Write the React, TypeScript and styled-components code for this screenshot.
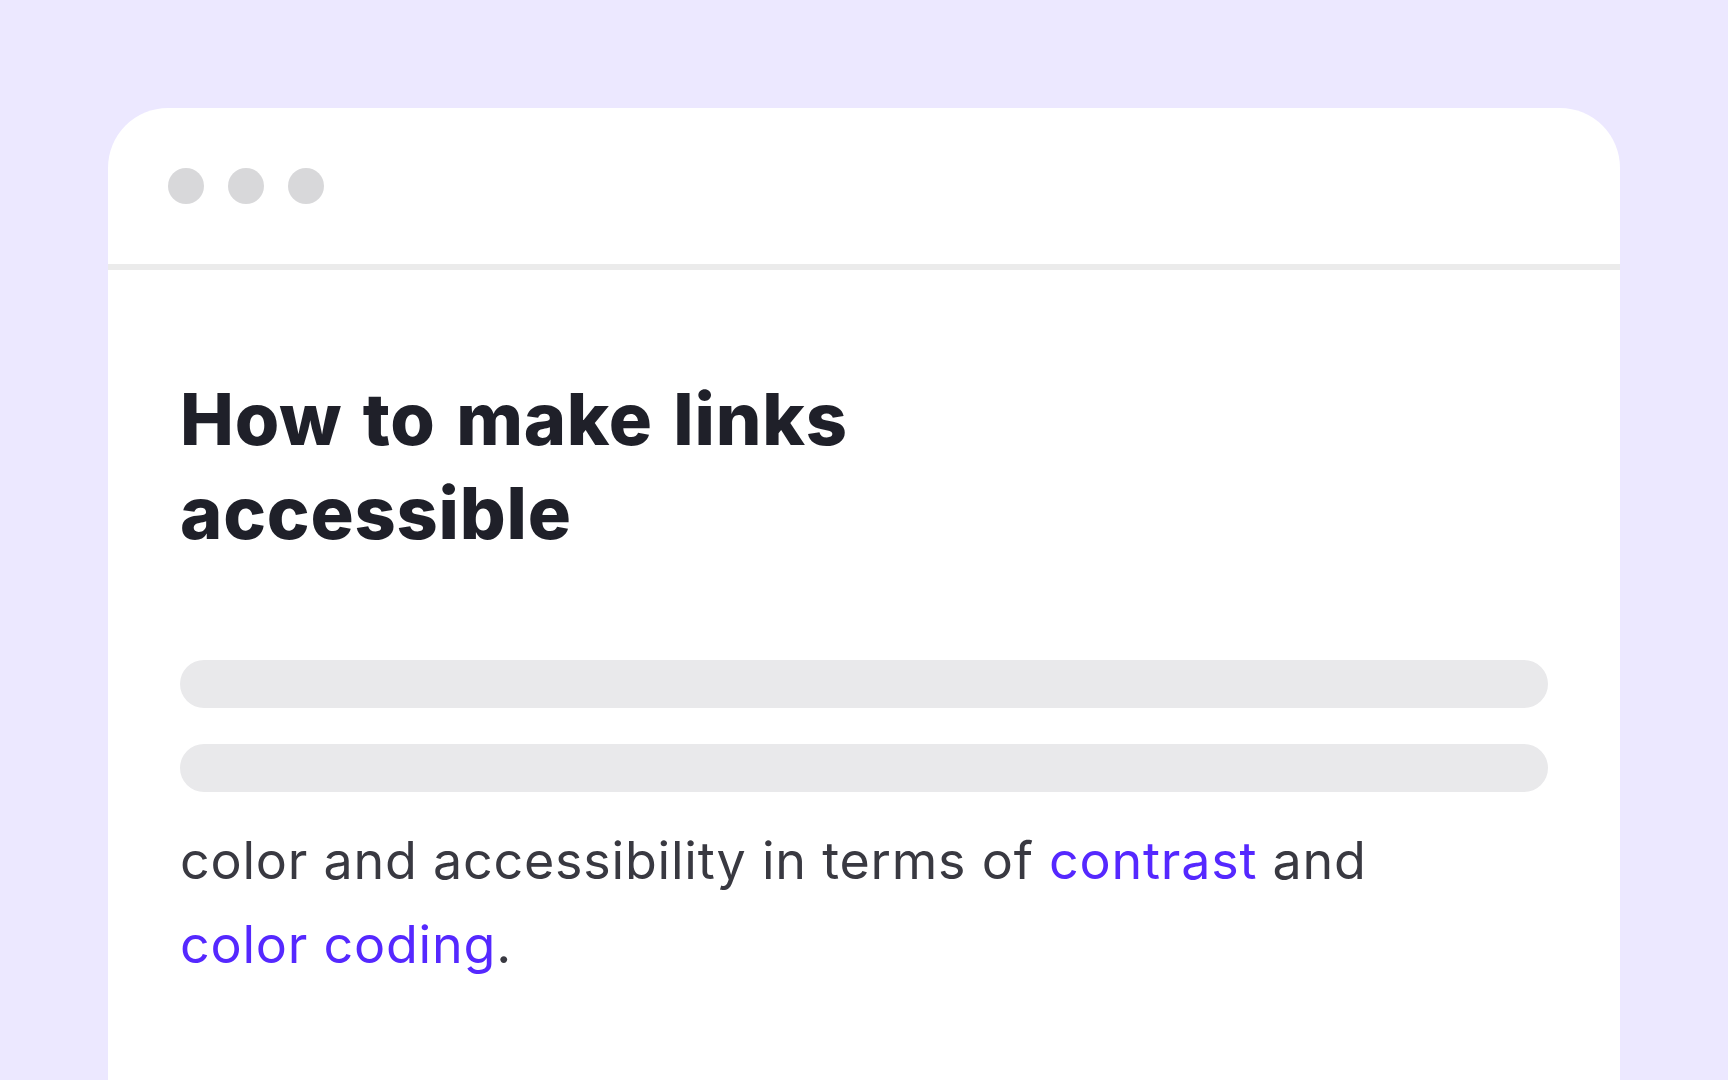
import * as React from "react";
import styled, { createGlobalStyle } from "styled-components";

const GlobalStyle = createGlobalStyle`
  html, body {
    margin: 0;
    padding: 0;
    height: 100%;
    overflow: hidden;
    background: #ece8ff;
  }
`;

const Page = styled.div`
  box-sizing: border-box;
  height: 100vh;
  padding: 108px 108px 0;
  display: flex;
  flex-direction: column;
`;

const Window = styled.div`
  flex: 1;
  background: #ffffff;
  border-radius: 60px 60px 0 0;
  display: flex;
  flex-direction: column;
`;

const TitleBar = styled.div`
  height: 156px;
  padding: 60px 60px 0;
  box-sizing: border-box;
  display: flex;
  gap: 24px;
`;

const Divider = styled.div`
  height: 6px;
  background: #ebebeb;
`;

const Dot = styled.span`
  width: 36px;
  height: 36px;
  border-radius: 50%;
  background: #d8d8da;
`;

const Content = styled.div`
  padding: 102px 72px 0;
  display: flex;
  flex-direction: column;
`;

const Title = styled.h1`
  margin: 0;
  font-family: Inter, "Noto Sans", sans-serif;
  font-weight: 800;
  font-size: 72px;
  line-height: 93.6px;
  letter-spacing: 0.011em;
  word-spacing: 4px;
  color: #1f2029;
`;

const Skeleton = styled.div`
  margin-top: 101px;
  display: flex;
  flex-direction: column;
  gap: 36px;
`;

const Bar = styled.div`
  height: 48px;
  border-radius: 24px;
  background: #e9e9eb;
`;

const Text = styled.p`
  margin: 27px 0 0;
  max-width: 1240px;
  font-family: Inter, "Noto Sans", sans-serif;
  font-weight: 400;
  font-size: 52px;
  line-height: 84px;
  letter-spacing: 0.015em;
  color: #393941;
`;

const Link = styled.a`
  color: #5528ff;
  text-decoration: none;
`;

export default function App() {
  return (
    <>
      <GlobalStyle />
      <Page>
        <Window>
          <TitleBar>
            <Dot />
            <Dot />
            <Dot />
          </TitleBar>
          <Divider />
          <Content>
            <Title>
              How to make links
              <br />
              accessible
            </Title>
            <Skeleton>
              <Bar />
              <Bar />
            </Skeleton>
            <Text>
              color and accessibility in terms of <Link href="#">contrast</Link> and{" "}
              <Link href="#">color coding</Link>.
            </Text>
          </Content>
        </Window>
      </Page>
    </>
  );
}
